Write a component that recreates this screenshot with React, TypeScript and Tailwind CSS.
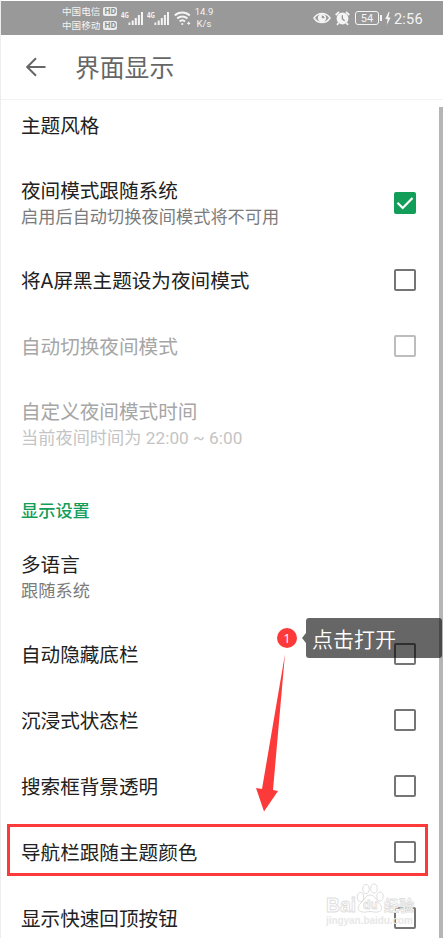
import { useState } from "react";
import clsx from "clsx";

type Item = {
  title: string;
  summary?: string;
  checked?: boolean;
  disabled?: boolean;
};

const themeItems: Item[] = [
  { title: "夜间模式跟随系统", summary: "启用后自动切换夜间模式将不可用", checked: true },
  { title: "将A屏黑主题设为夜间模式", checked: false },
  { title: "自动切换夜间模式", checked: false, disabled: true },
  { title: "自定义夜间模式时间", summary: "当前夜间时间为 22:00 ~ 6:00", disabled: true },
];

const displayItems: Item[] = [
  { title: "多语言", summary: "跟随系统" },
  { title: "自动隐藏底栏", checked: false },
  { title: "沉浸式状态栏", checked: false },
  { title: "搜索框背景透明", checked: false },
  { title: "导航栏跟随主题颜色", checked: false },
  { title: "显示快速回顶按钮", checked: false },
];

function HdBadge() {
  return (
    <span className="flex h-[9px] w-[14px] items-center justify-center rounded-[2px] bg-[#ececec] text-[8px] leading-none font-bold text-[#8a8a8a]">
      HD
    </span>
  );
}

function Signal() {
  return (
    <svg width="23" height="16" viewBox="0 0 23 16" fill="#f4f4f4">
      <text x="0" y="8" fontSize="8" fontWeight="700" textLength="8" lengthAdjust="spacingAndGlyphs">
        4G
      </text>
      <rect x="7.5" y="12.5" width="1.8" height="2.5" />
      <rect x="10.7" y="10.5" width="2" height="4.5" />
      <rect x="13.8" y="8" width="2" height="7" />
      <rect x="16.9" y="5" width="2" height="10" />
      <rect x="20" y="2" width="2" height="13" />
    </svg>
  );
}

function StatusBar() {
  return (
    <div className="mt-px flex h-[34px] shrink-0 items-center bg-[#999999] pl-[61px] text-[#f4f4f4]">
      <div className="flex w-[59px] flex-col text-[9.6px] leading-[14px]">
        <div className="flex items-center gap-[3px]">
          中国电信
          <HdBadge />
        </div>
        <div className="flex items-center gap-[3px]">
          中国移动
          <HdBadge />
        </div>
      </div>
      <Signal />
      <div className="ml-[3px]">
        <Signal />
      </div>
      <svg className="ml-[4px]" width="17" height="16" viewBox="0 0 17 16" fill="none" stroke="#f4f4f4" strokeWidth="2">
        <path d="M0.8 5.4a11 11 0 0 1 15 0" />
        <path d="M3.2 8.6a7.5 7.5 0 0 1 10.2 0" />
        <path d="M5.6 11.5a4 4 0 0 1 5.4 0" />
        <circle cx="8.3" cy="14" r="1.1" fill="#f4f4f4" stroke="none" />
        <path d="M13.2 13.3h3M14.7 11.8v3" strokeWidth="1.2" />
      </svg>
      <div className="ml-[3px] w-[20px] text-center font-['Roboto'] text-[9.5px] leading-[12px]">
        14.9
        <br />
        K/s
      </div>
      <svg className="ml-[99px]" width="18" height="12" viewBox="0 0 18 12">
        <path d="M1 6C5 0 13 0 17 6C13 12 5 12 1 6Z" fill="none" stroke="#f4f4f4" strokeWidth="1.5" />
        <circle cx="9" cy="6" r="4.2" fill="#f4f4f4" />
        <path d="M8.8 6.2V3.6a2.5 2.5 0 0 1 2.6 2.6z" fill="#999" />
      </svg>
      <svg className="ml-[4px]" width="15" height="15" viewBox="0 0 15 15">
        <circle cx="7.5" cy="7.5" r="5.9" fill="#f4f4f4" />
        <path d="M0.7 4 4 0.9M14.3 4 11 0.9M3.5 12 2 13.8M11.5 12l1.5 1.8" stroke="#f4f4f4" strokeWidth="1.8" />
        <path d="M7.3 4.2v3.6l2.3 2" fill="none" stroke="#8c8c8c" strokeWidth="1.2" />
      </svg>
      <div className="ml-[5px] flex h-[14px] w-[24px] items-center justify-center rounded-[3px] border border-[#f4f4f4] pt-px font-['Roboto'] text-[11px] leading-none">
        54
      </div>
      <span className="ml-px h-[6px] w-[2px] bg-[#f4f4f4]" />
      <svg className="ml-[3px]" width="6" height="13" viewBox="0 0 6 13" fill="#f4f4f4">
        <path d="M3.6 0 0.3 7h2.3L1.7 13 5.7 5.5H3.3L4.6 0z" />
      </svg>
      <span className="mt-[4px] ml-[3px] font-['Roboto'] text-[14.5px] leading-none tracking-[0.2px]">2:56</span>
    </div>
  );
}

function Header() {
  return (
    <header className="flex h-[65px] shrink-0 items-center border-b border-[#f3f3f3] pl-[24px]">
      <svg width="22" height="20" viewBox="0 0 22 20" fill="none" stroke="#666" strokeWidth="2">
        <path d="M20.5 10H2.5M11 1.2 2.2 10 11 18.8" />
      </svg>
      <h1 className="ml-[28px] text-[24.8px] text-[#666]">界面显示</h1>
    </header>
  );
}

function Checkbox({ checked, disabled }: { checked: boolean; disabled?: boolean }) {
  if (checked) {
    return (
      <span className="flex size-[22px] items-center justify-center rounded-[2px] bg-[#129d58]">
        <svg width="18" height="14" viewBox="0 0 18 14" fill="none" stroke="white" strokeWidth="2.2">
          <path d="M1.5 6.8 6.7 12 16.5 2" />
        </svg>
      </span>
    );
  }
  return (
    <span
      className={clsx(
        "size-[22px] rounded-[2px] border-2",
        disabled ? "border-[#bdbdbd]" : "border-[#757575]"
      )}
    />
  );
}

function Row({ item }: { item: Item }) {
  const [checked, setChecked] = useState(item.checked ?? false);

  return (
    <div
      className={clsx(
        "flex shrink-0 items-center justify-between pr-[27px] pl-[20px]",
        item.summary ? "h-[89px]" : "h-[66px]"
      )}
      onClick={() => !item.disabled && setChecked(!checked)}
    >
      <div
        className={clsx(
          "font-['Roboto','Noto_Sans_CJK_SC',sans-serif]",
          item.summary ? "pb-px" : "pt-[4px]"
        )}
      >
        <p
          className={clsx(
            "text-[19.6px] leading-[30px]",
            item.disabled ? "text-[#a6a6a6]" : "text-[#212121]"
          )}
        >
          {item.title}
        </p>
        {item.summary && (
          <p
            className={clsx(
              "text-[17.2px] leading-[20px] tracking-[0.03px]",
              item.disabled ? "text-[#c4c4c4]" : "text-[#7b7b7b]"
            )}
          >
            {item.summary}
          </p>
        )}
      </div>
      {item.checked !== undefined && <Checkbox checked={checked} disabled={item.disabled} />}
    </div>
  );
}

function Annotations() {
  return (
    <>
      <div className="absolute top-[824px] left-[6px] h-[52px] w-[421px] border-3 border-[#fd3a3a]" />
      <svg className="absolute top-[650px] left-[249px]" width="40" height="165" fill="#fd3a3a">
        <path d="M35 4 12 139 6 138 14 161.5 28 141 23 140Z" />
      </svg>
      <span className="absolute top-[628px] left-[276px] flex size-[20px] items-center justify-center rounded-full bg-[#fd3a3a] font-['Open_Sans'] text-[13px] leading-none text-white">
        1
      </span>
      <div className="absolute top-[618px] left-[305px] flex h-[40px] w-[136px] items-center rounded-[3px] bg-black/60 pt-px pl-[6px] text-[21px] font-[350] text-white">
        点击打开
      </div>
      <svg className="absolute top-[633px] left-[301px]" width="4" height="10">
        <path d="M4 0v10L0 5z" fill="black" fillOpacity="0.6" />
      </svg>
    </>
  );
}

function Watermark() {
  return (
    <svg
      className="absolute top-[880px] left-[321px] overflow-visible"
      width="100"
      height="54"
      fill="white"
      stroke="#dedede"
      strokeWidth="1"
    >
      <g fontFamily="Liberation Sans" fontWeight="700">
        <text x="4" y="31.5" fontSize="21" textLength="30" lengthAdjust="spacingAndGlyphs">
          Bai
        </text>
        <path d="M48 15c5 0 6 5 9 8s4 8-1 9c-3 .5-6-.5-8-.5s-5 1-8 .5c-5-1-5-6-1-9s4-8 9-8z" />
        <ellipse cx="38.5" cy="17" rx="3.2" ry="4.5" />
        <ellipse cx="44" cy="9" rx="3.2" ry="4.5" />
        <ellipse cx="52" cy="8.5" rx="3.2" ry="4.5" />
        <ellipse cx="58" cy="16.5" rx="3.2" ry="4.5" />
        <text x="41" y="29" fontSize="12" strokeWidth="0.8">
          du
        </text>
        <text x="4" y="43.5" fontSize="10" fill="#e8e8e8" stroke="none" textLength="87">
          jingyan.baidu.com
        </text>
      </g>
      <text x="62" y="31" fontSize="15" fontWeight="700" strokeWidth="0.8" textLength="30">
        经验
      </text>
    </svg>
  );
}

export default function App() {
  return (
    <div className="relative flex h-[938px] w-[443px] flex-col overflow-hidden border-l border-[#ededed] bg-white font-['Noto_Sans_CJK_SC',sans-serif]">
      <StatusBar />
      <Header />
      <main className="flex min-h-0 flex-1 justify-between">
        <div className="flex w-[442px] shrink-0 flex-col">
          <div className="flex h-[58px] shrink-0 items-center pb-[9px] pl-[20px] text-[19.6px] text-[#212121]">
            主题风格
          </div>
          {themeItems.map((item) => (
            <Row key={item.title} item={item} />
          ))}
          <h2 className="flex h-[64px] shrink-0 items-end pb-[10px] pl-[20px] text-[17.2px] leading-[24px] font-medium text-[#129d58]">
            显示设置
          </h2>
          {displayItems.map((item) => (
            <Row key={item.title} item={item} />
          ))}
        </div>
        <div className="mt-[7px] -ml-[4px] w-[4px] shrink-0 bg-[#b5b5b5]" />
      </main>
      <Annotations />
      <Watermark />
    </div>
  );
}
